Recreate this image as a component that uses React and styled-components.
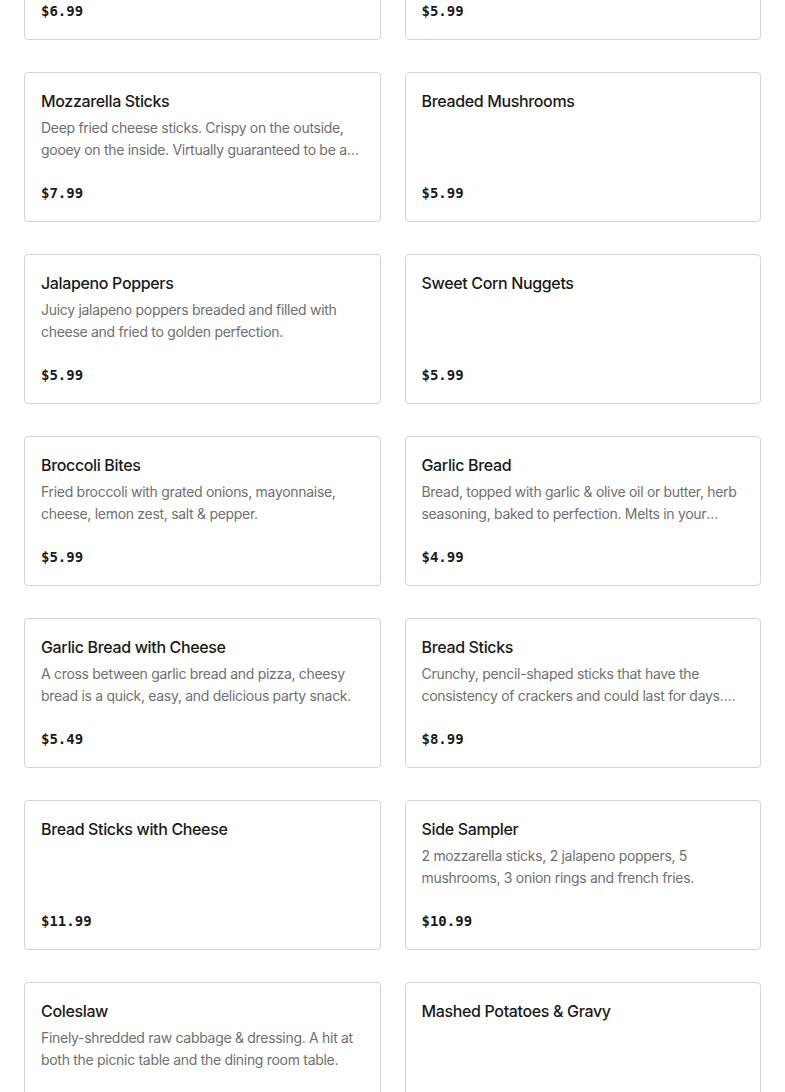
import React from "react";
import styled, { createGlobalStyle } from "styled-components";

const Global = createGlobalStyle`
  html, body { margin: 0; padding: 0; background: #fff; }
  body { font-family: Inter, "Noto Sans", sans-serif; overflow: hidden; }
  * { box-sizing: border-box; }
`;

const Grid = styled.div`
  display: grid;
  grid-template-columns: 1fr 1fr;
  column-gap: 24px;
  row-gap: 32px;
  padding: 0 24px;
  margin-top: -110px;
`;

const Card = styled.div`
  height: 150px;
  border: 1px solid #d4d4d4;
  border-radius: 4px;
  padding: 16px;
  display: flex;
  flex-direction: column;
  background: #fff;
`;

const Title = styled.div`
  font-family: Inter, "Noto Sans", sans-serif;
  font-size: 16px;
  font-weight: 500;
  line-height: 24px;
  letter-spacing: -0.35px;
  color: #1a1a1a;
`;

const Desc = styled.div`
  margin-top: 4px;
  font-family: Inter, "Noto Sans", sans-serif;
  font-size: 14px;
  line-height: 22px;
  letter-spacing: -0.3px;
  color: #707070;
  display: -webkit-box;
  -webkit-line-clamp: 2;
  -webkit-box-orient: vertical;
  overflow: hidden;
`;

const Price = styled.div`
  margin-top: auto;
  font-family: "DejaVu Sans Mono", "Liberation Mono", monospace;
  font-size: 14px;
  font-weight: 700;
  line-height: 24px;
  color: #1a1a1a;
`;

const items = [
  { title: "Onion Rings", desc: "", price: "$6.99" },
  { title: "French Fries", desc: "", price: "$5.99" },
  { title: "Mozzarella Sticks", desc: "Deep fried cheese sticks. Crispy on the outside, gooey on the inside. Virtually guaranteed to be a hit with everyone.", price: "$7.99" },
  { title: "Breaded Mushrooms", desc: "", price: "$5.99" },
  { title: "Jalapeno Poppers", desc: "Juicy jalapeno poppers breaded and filled with cheese and fried to golden perfection.", price: "$5.99" },
  { title: "Sweet Corn Nuggets", desc: "", price: "$5.99" },
  { title: "Broccoli Bites", desc: "Fried broccoli with grated onions, mayonnaise, cheese, lemon zest, salt & pepper.", price: "$5.99" },
  { title: "Garlic Bread", desc: "Bread, topped with garlic & olive oil or butter, herb seasoning, baked to perfection. Melts in your mouth.", price: "$4.99" },
  { title: "Garlic Bread with Cheese", desc: "A cross between garlic bread and pizza, cheesy bread is a quick, easy, and delicious party snack.", price: "$5.49" },
  { title: "Bread Sticks", desc: "Crunchy, pencil-shaped sticks that have the consistency of crackers and could last for days. Perfect for dipping.", price: "$8.99" },
  { title: "Bread Sticks with Cheese", desc: "", price: "$11.99" },
  { title: "Side Sampler", desc: "2 mozzarella sticks, 2 jalapeno poppers, 5 mushrooms, 3 onion rings and french fries.", price: "$10.99" },
  { title: "Coleslaw", desc: "Finely-shredded raw cabbage & dressing. A hit at both the picnic table and the dining room table.", price: "$3.99" },
  { title: "Mashed Potatoes & Gravy", desc: "", price: "$3.99" },
];

export default function App() {
  return (
    <>
      <Global />
      <Grid>
        {items.map((it) => (
          <Card key={it.title}>
            <Title>{it.title}</Title>
            {it.desc ? <Desc>{it.desc}</Desc> : null}
            <Price>{it.price}</Price>
          </Card>
        ))}
      </Grid>
    </>
  );
}
